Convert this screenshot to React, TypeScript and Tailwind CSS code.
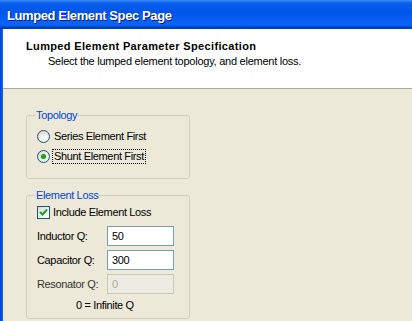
import { useState } from 'react';

function Radio({ checked, label, focused }: { checked: boolean; label: string; focused?: boolean }) {
  return (
    <div className="flex items-center h-[20px]">
      <span className="w-[13px] h-[13px] rounded-full border border-[#1c5180] bg-[radial-gradient(circle_at_60%_65%,#ffffff_0%,#eeeee6_45%,#cbc9bd_100%)] flex items-center justify-center">
        {checked && <span className="w-[5px] h-[5px] rounded-full bg-[#21a121] shadow-[0_0_1px_#5fd65f]" />}
      </span>
      <span
        className={`ml-[3px] px-[1px] leading-[13px] ${focused ? 'outline outline-1 outline-dotted outline-black' : ''}`}
      >
        {label}
      </span>
    </div>
  );
}

function Field({ label, value, disabled }: { label: string; value: string; disabled?: boolean }) {
  return (
    <div className="flex items-center h-[24px]">
      <span className={`w-[70px] ${disabled ? 'text-[#333]' : ''}`}>{label}</span>
      <div
        className={`w-[67px] h-[20px] border flex items-center px-[4px] ${
          disabled ? 'border-[#c9c7ba] bg-[#ecebe4] text-[#aca899]' : 'border-[#7f9db9] bg-white'
        }`}
      >
        {value}
      </div>
    </div>
  );
}

export default function App() {
  const [lossOn] = useState(true);

  return (
    <div className="w-[412px] h-[321px] overflow-hidden flex flex-col bg-[#ece9d8] text-[11px] tracking-[-0.35px] text-black font-['Liberation_Sans',Arial,sans-serif]">
      {/* XP title bar */}
      <div className="h-[29px] shrink-0 flex items-center pl-[7px] pt-[3px] bg-[linear-gradient(to_bottom,#3c8cf7_0px,#0a5ff0_3px,#0055ea_12px,#0a63f5_22px,#0a63f5_25px,#0048d0_27px,#0038a8_29px)]">
        <span className="text-white font-bold text-[13px] tracking-[-0.4px] [text-shadow:1px_1px_#0a1883]">
          Lumped Element Spec Page
        </span>
      </div>

      <div className="flex flex-1 min-h-0">
        <div className="w-[3px] shrink-0 bg-[linear-gradient(to_right,#0a3ac8,#0058ee,#1667e8)]" />

        <div className="flex-1 flex flex-col">
          {/* wizard header */}
          <div className="h-[60px] shrink-0 bg-white border-b border-[#aca899] pt-[11px] pl-[23px]">
            <div className="font-bold leading-[13px] tracking-[0.35px]">Lumped Element Parameter Specification</div>
            <div className="pl-[22px] pt-[2px] leading-[13px] tracking-[-0.25px]">
              Select the lumped element topology, and element loss.
            </div>
          </div>

          <div className="pl-[23px] pt-[20px]">
            <fieldset className="w-[164px] border border-[#d0d0bf] rounded-[3px] pl-[10px] pb-[12px] pt-[4px]">
              <legend className="ml-[-2px] px-[1px] text-[#0046d5] leading-[13px]">Topology</legend>
              <Radio checked={false} label="Series Element First" />
              <Radio checked label="Shunt Element First" focused />
            </fieldset>

            <fieldset className="w-[164px] mt-[10px] border border-[#d0d0bf] rounded-[3px] pl-[10px] pb-[6px] pt-[1px]">
              <legend className="ml-[-2px] px-[1px] text-[#0046d5] leading-[13px]">Element Loss</legend>
              <div className="flex items-center h-[18px]">
                <span className="w-[13px] h-[13px] border border-[#1c5180] bg-[linear-gradient(135deg,#dcdcd7,#ffffff)] flex items-center justify-center">
                  {lossOn && (
                    <svg width="9" height="9" viewBox="0 0 9 9">
                      <path d="M1 4 L3.5 6.5 L8 1.5" fill="none" stroke="#21a121" strokeWidth="2" />
                    </svg>
                  )}
                </span>
                <span className="ml-[3px]">Include Element Loss</span>
              </div>
              <div className="pt-[3px]">
                <Field label="Inductor Q:" value="50" />
                <Field label="Capacitor Q:" value="300" />
                <Field label="Resonator Q:" value="0" disabled />
              </div>
              <div className="pl-[39px] pt-[3px] leading-[13px]">0 = Infinite Q</div>
            </fieldset>
          </div>
        </div>
      </div>
    </div>
  );
}
